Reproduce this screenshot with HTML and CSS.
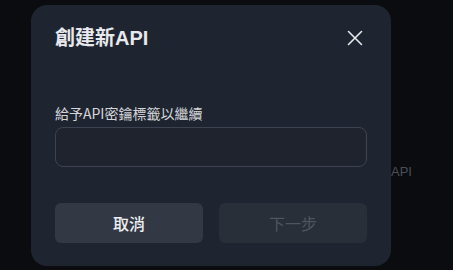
FILE: index.html
```html
<!DOCTYPE html>
<html lang="zh-Hant">
  <head>
    <meta charset="UTF-8" />
    <meta name="viewport" content="width=device-width, initial-scale=1.0" />
    <title>創建新API</title>
    <link rel="stylesheet" href="styles.css">
  </head>
  <body>
    <div class="page">
      <div class="page-row">
        <span class="page-label">新API</span>
      </div>
    </div>

    <div class="overlay">
      <div class="dialog">
        <div class="dialog-header">
          <h2 class="dialog-title">創建新API</h2>
          <button class="close-btn" aria-label="close">
            <svg width="16" height="16" viewBox="0 0 16 16">
              <path d="M1.5 1.5 L14.5 14.5 M14.5 1.5 L1.5 14.5" stroke="#e6e8eb" stroke-width="1.6" stroke-linecap="round" fill="none" />
            </svg>
          </button>
        </div>

        <div class="field">
          <label class="field-label" for="apiName">給予API密鑰標籤以繼續</label>
          <input type="text" id="apiName" class="field-input" />
        </div>

        <div class="actions">
          <button class="btn btn-cancel">取消</button>
          <button class="btn btn-next" disabled>下一步</button>
        </div>
      </div>
    </div>
  </body>
</html>
```

FILE: styles.css
```css
body {
  margin: 0;
  background-color: #0b0c0f;
  font-family: "Noto Sans CJK TC", "Noto Sans", sans-serif;
  width: 453px;
  height: 270px;
  overflow: hidden;
}

.page {
  padding-top: 161px;
}

.page-row {
  display: flex;
  justify-content: flex-end;
  padding-right: 41px;
}

.page-label {
  font-family: "Liberation Sans", "Noto Sans CJK TC", sans-serif;
  font-size: 13px;
  color: #4b4f57;
}

.overlay {
  position: absolute;
  top: 5px;
  left: 31px;
}

.dialog {
  width: 360px;
  box-sizing: border-box;
  padding: 20px 24px 23px;
  background-color: #1f2530;
  border-radius: 16px;
}

.dialog-header {
  display: flex;
  justify-content: space-between;
  align-items: center;
  height: 26px;
}

.dialog-title {
  margin: 0;
  font-family: "Liberation Sans", "Noto Sans CJK TC", sans-serif;
  font-size: 20px;
  font-weight: bold;
  color: #e8e9ec;
  line-height: 26px;
}

.close-btn {
  display: flex;
  align-items: center;
  justify-content: center;
  width: 24px;
  height: 24px;
  padding: 0;
  background: none;
  border: none;
  cursor: pointer;
}

.field {
  margin-top: 52px;
  display: flex;
  flex-direction: column;
  gap: 4px;
}

.field-label {
  font-size: 14px;
  line-height: 20px;
  color: #d4d6da;
}

.field-input {
  height: 40px;
  box-sizing: border-box;
  border: 1px solid #3d4350;
  border-radius: 8px;
  background-color: #1e232d;
  color: #e8e9ec;
  padding: 0 12px;
  font-size: 14px;
  outline: none;
}

.actions {
  margin-top: 36px;
  display: grid;
  grid-template-columns: 1fr 1fr;
  gap: 16px;
}

.btn {
  height: 40px;
  border: none;
  border-radius: 6px;
  font-family: "Noto Sans CJK TC", "Noto Sans", sans-serif;
  font-size: 16px;
  cursor: pointer;
}

.btn-cancel {
  background-color: #333944;
  color: #eceef1;
  font-weight: 500;
}

.btn-next {
  background-color: #292f38;
  color: #4f5560;
  cursor: default;
}
```
